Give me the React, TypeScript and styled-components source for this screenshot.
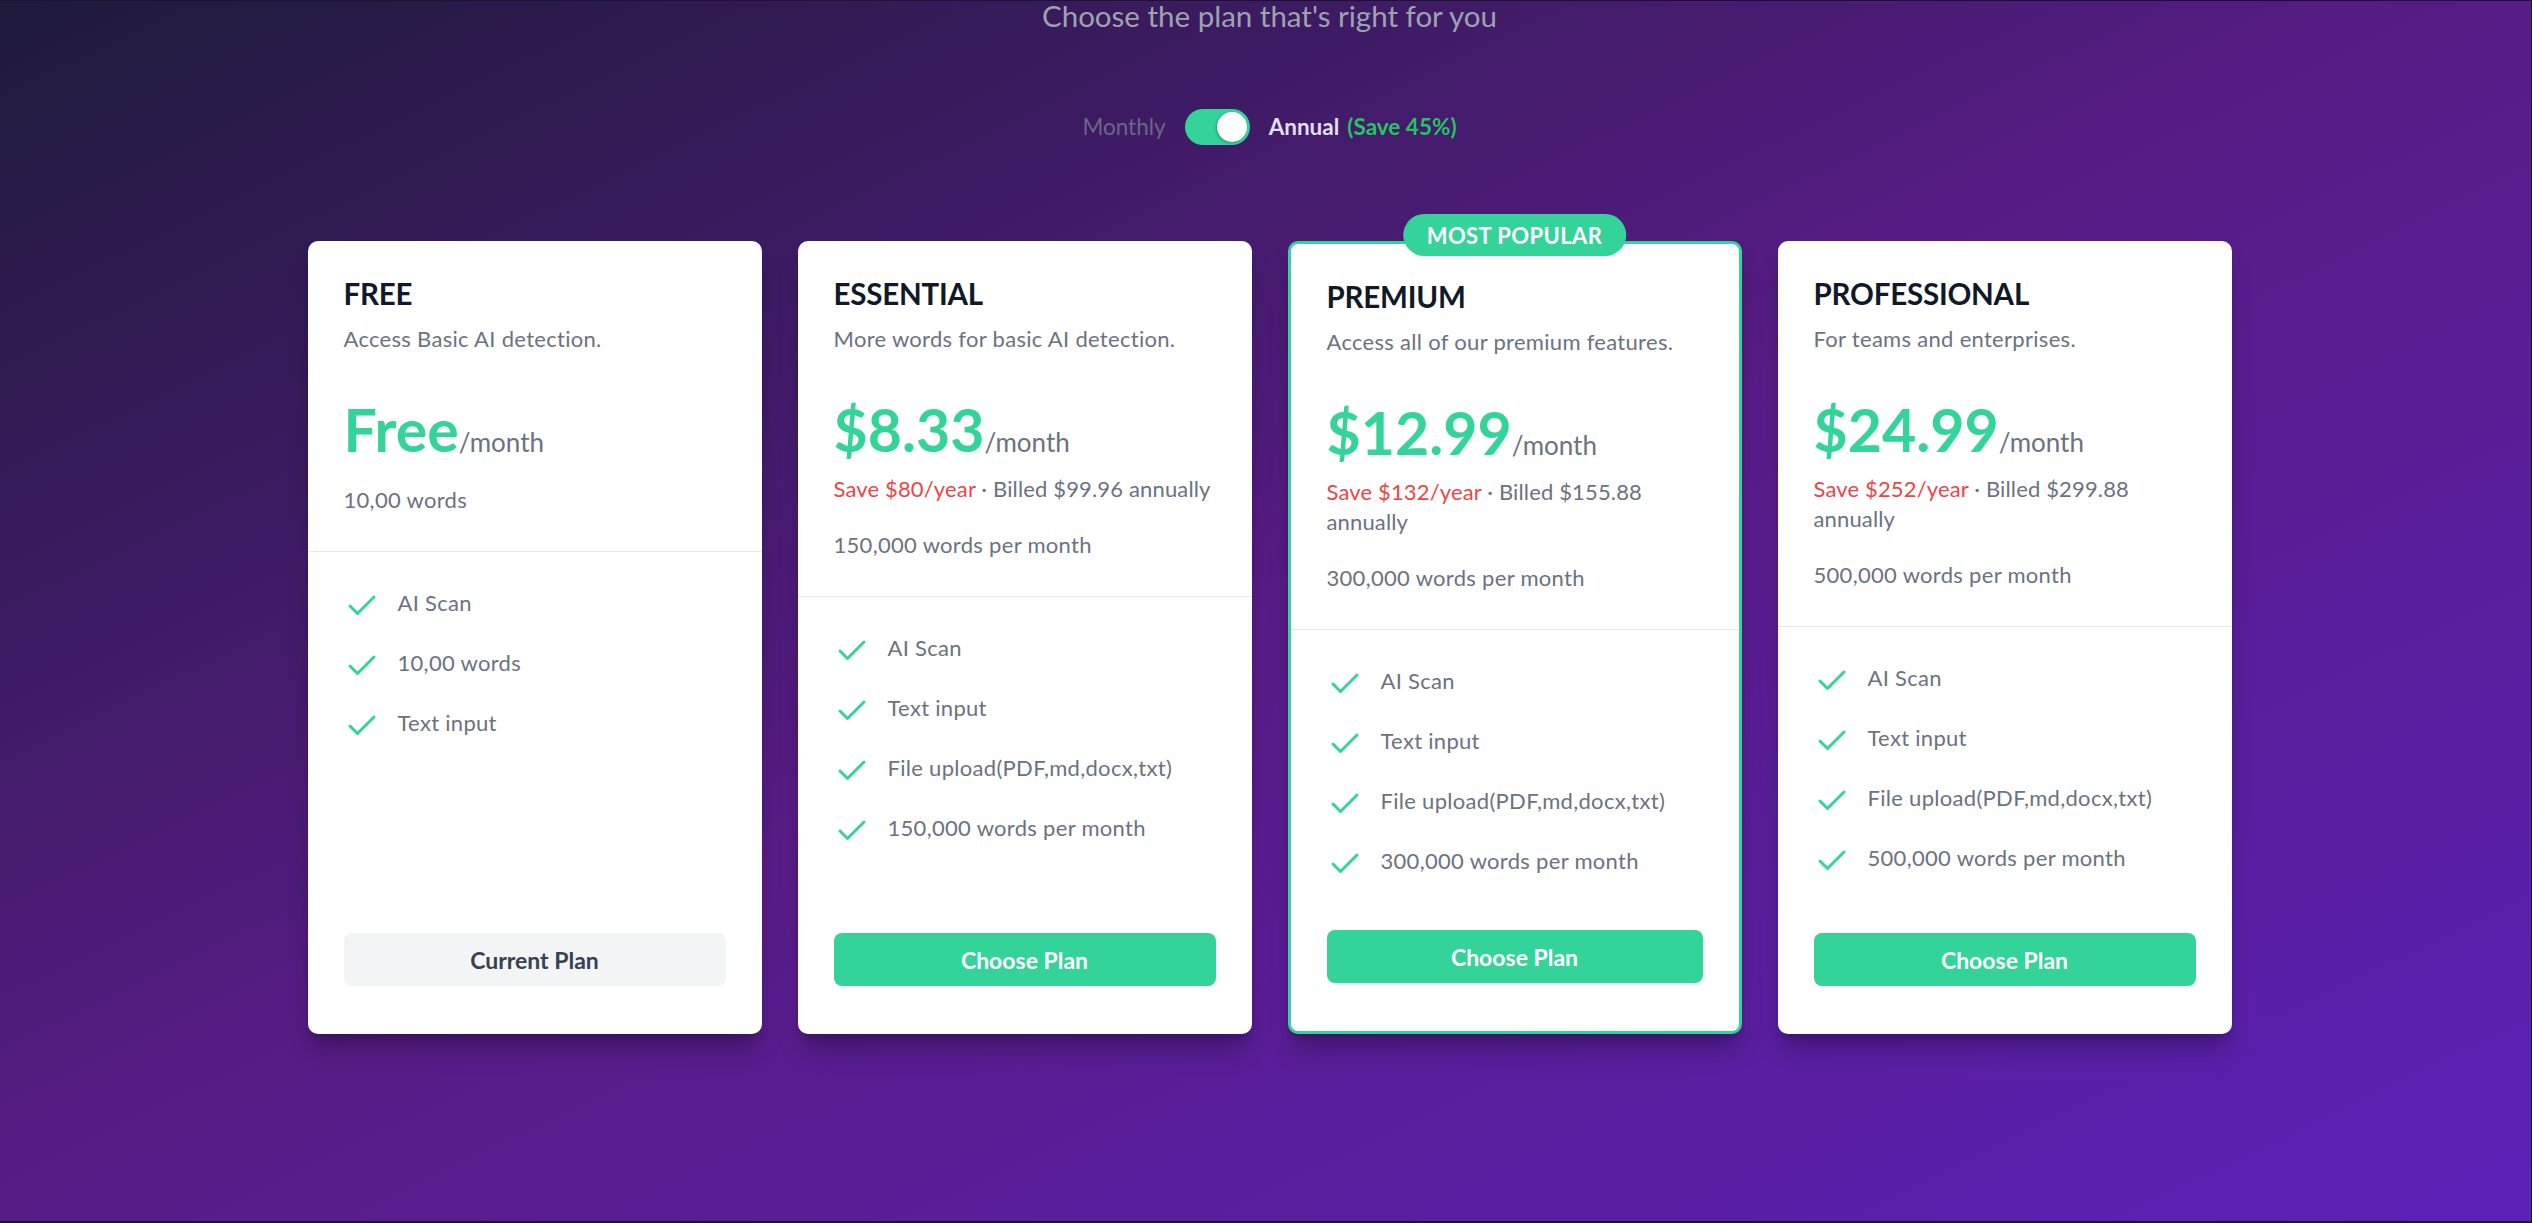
import React, { useState } from 'react';
import styled, { createGlobalStyle } from 'styled-components';
import { Check } from 'lucide-react';

interface Plan {
  name: string;
  description: string;
  price: string;
  savings?: string;
  billed?: string;
  words: string;
  features: string[];
  current?: boolean;
  popular?: boolean;
}

const plans: Plan[] = [
  {
    name: 'FREE',
    description: 'Access Basic AI detection.',
    price: 'Free',
    words: '10,00 words',
    features: ['AI Scan', '10,00 words', 'Text input'],
    current: true,
  },
  {
    name: 'ESSENTIAL',
    description: 'More words for basic AI detection.',
    price: '$8.33',
    savings: 'Save $80/year',
    billed: 'Billed $99.96 annually',
    words: '150,000 words per month',
    features: ['AI Scan', 'Text input', 'File upload(PDF,md,docx,txt)', '150,000 words per month'],
  },
  {
    name: 'PREMIUM',
    description: 'Access all of our premium features.',
    price: '$12.99',
    savings: 'Save $132/year',
    billed: 'Billed $155.88 annually',
    words: '300,000 words per month',
    features: ['AI Scan', 'Text input', 'File upload(PDF,md,docx,txt)', '300,000 words per month'],
    popular: true,
  },
  {
    name: 'PROFESSIONAL',
    description: 'For teams and enterprises.',
    price: '$24.99',
    savings: 'Save $252/year',
    billed: 'Billed $299.88 annually',
    words: '500,000 words per month',
    features: ['AI Scan', 'Text input', 'File upload(PDF,md,docx,txt)', '500,000 words per month'],
  },
];

const GlobalStyle = createGlobalStyle`
  * { box-sizing: border-box; }
  body {
    margin: 0;
    font-family: Lato, "Open Sans", sans-serif;
  }
`;

const PricingPlans = () => {
  const [annual, setAnnual] = useState(true);

  return (
    <Page>
      <GlobalStyle />
      <Heading>Choose the plan that's right for you</Heading>

      <ToggleRow>
        <PeriodLabel>Monthly</PeriodLabel>
        <Switch $on={annual} onClick={() => setAnnual(!annual)}>
          <Knob />
        </Switch>
        <PeriodLabel $active>
          Annual<SaveTag>(Save 45%)</SaveTag>
        </PeriodLabel>
      </ToggleRow>

      <PlanGrid>
        {plans.map((plan) => (
          <Card key={plan.name} $popular={plan.popular}>
            {plan.popular && <Badge>MOST POPULAR</Badge>}
            <CardHeader>
              <PlanName>{plan.name}</PlanName>
              <PlanDescription>{plan.description}</PlanDescription>
              <PriceRow>
                <Price>{plan.price}</Price>
                <Period>/month</Period>
              </PriceRow>
              {plan.savings && (
                <Billing>
                  <Savings>{plan.savings}</Savings> · {plan.billed}
                </Billing>
              )}
              <Words>{plan.words}</Words>
            </CardHeader>

            <FeatureList>
              {plan.features.map((feature) => (
                <FeatureItem key={feature}>
                  <Check size={36} strokeWidth={2} color="#34d399" />
                  <span>{feature}</span>
                </FeatureItem>
              ))}
            </FeatureList>

            <Actions>
              <PlanButton $current={plan.current}>
                {plan.current ? 'Current Plan' : 'Choose Plan'}
              </PlanButton>
            </Actions>
          </Card>
        ))}
      </PlanGrid>
    </Page>
  );
};

const Page = styled.div`
  min-height: 100vh;
  padding-left: 8px;
  background: linear-gradient(to bottom right, #1e1a3a 0%, #581c87 50%, #5b21b6 100%);
  border-top: 1px solid #1a1430;
  border-right: 1px solid #1a1430;
  border-bottom: 2px solid #1a1430;
  overflow: hidden;
`;

const Heading = styled.h2`
  margin: -3px 0 0;
  font-size: 29.5px;
  line-height: 36px;
  font-weight: 400;
  color: #9ca3af;
  text-align: center;
`;

const ToggleRow = styled.div`
  margin-top: 75px;
  display: flex;
  justify-content: center;
  align-items: center;
  gap: 19px;
`;

const PeriodLabel = styled.span<{ $active?: boolean }>`
  font-size: 22.5px;
  line-height: 30px;
  font-weight: ${(p) => (p.$active ? 700 : 400)};
  color: ${(p) => (p.$active ? '#e4dff0' : '#6b6785')};
`;

const SaveTag = styled.span`
  margin-left: 8px;
  color: #22c55e;
`;

const Switch = styled.button<{ $on: boolean }>`
  width: 65px;
  height: 36px;
  padding: 3px;
  border: none;
  border-radius: 999px;
  background: ${(p) => (p.$on ? '#34d399' : '#4b5563')};
  display: flex;
  justify-content: ${(p) => (p.$on ? 'flex-end' : 'flex-start')};
  align-items: center;
  cursor: pointer;
`;

const Knob = styled.span`
  width: 30px;
  height: 30px;
  border-radius: 50%;
  background: #ffffff;
  box-shadow: -1px 1px 3px rgba(0, 0, 0, 0.25);
`;

const PlanGrid = styled.div`
  max-width: 1924px;
  margin: 96px auto 0;
  display: grid;
  grid-template-columns: repeat(4, 1fr);
  gap: 36px;
`;

const Card = styled.div<{ $popular?: boolean }>`
  position: relative;
  display: flex;
  flex-direction: column;
  background: #ffffff;
  border-radius: 10px;
  border: ${(p) => (p.$popular ? '3px solid #34d399' : 'none')};
  box-shadow: 0 20px 25px -5px rgba(0, 0, 0, 0.25), 0 8px 10px -6px rgba(0, 0, 0, 0.2);
`;

const Badge = styled.div`
  position: absolute;
  top: -30px;
  left: 50%;
  transform: translateX(-50%);
  height: 42px;
  padding: 0 24px;
  display: flex;
  align-items: center;
  border-radius: 999px;
  background: #34d399;
  color: #ffffff;
  font-size: 22px;
  font-weight: 700;
  letter-spacing: 0.4px;
  white-space: nowrap;
`;

const CardHeader = styled.div`
  padding: 33px 36px 36px;
  border-bottom: 1px solid #e5e7eb;
`;

const PlanName = styled.h3`
  margin: 0;
  font-size: 29.5px;
  line-height: 40px;
  font-weight: 700;
  letter-spacing: -0.2px;
  color: #111827;
`;

const PlanDescription = styled.p`
  margin: 10px 0 0;
  font-size: 22px;
  line-height: 30px;
  letter-spacing: 0.3px;
  color: #6b7280;
`;

const PriceRow = styled.div`
  margin-top: 46px;
  display: flex;
  align-items: baseline;
  line-height: 1;
`;

const Price = styled.span`
  font-size: 59px;
  font-weight: 700;
  color: #34d399;
`;

const Period = styled.span`
  font-size: 26px;
  color: #6b7280;
`;

const Billing = styled.p`
  margin: 15px 0 0;
  font-size: 22px;
  line-height: 30px;
  letter-spacing: 0.15px;
  color: #6b7280;
`;

const Savings = styled.span`
  color: #ef4444;
`;

const Words = styled.p`
  margin: 26px 0 0;
  font-size: 22px;
  line-height: 30px;
  letter-spacing: 0.3px;
  color: #6b7280;
`;

const FeatureList = styled.ul`
  list-style: none;
  margin: 0;
  padding: 36px 36px 0;
  display: flex;
  flex-direction: column;
  gap: 24px;
`;

const FeatureItem = styled.li`
  display: flex;
  align-items: flex-start;
  gap: 18px;
  font-size: 22px;
  line-height: 30px;
  letter-spacing: 0.3px;
  color: #6b7280;

  svg {
    flex-shrink: 0;
  }
`;

const Actions = styled.div`
  margin-top: auto;
  padding: 48px 36px 48px;
`;

const PlanButton = styled.button<{ $current?: boolean }>`
  width: 100%;
  height: 53px;
  border: none;
  border-radius: 8px;
  font-family: inherit;
  font-size: 23px;
  font-weight: 700;
  background: ${(p) => (p.$current ? '#f3f4f6' : '#34d399')};
  color: ${(p) => (p.$current ? '#374151' : '#ffffff')};
  cursor: pointer;
`;

export default PricingPlans;
